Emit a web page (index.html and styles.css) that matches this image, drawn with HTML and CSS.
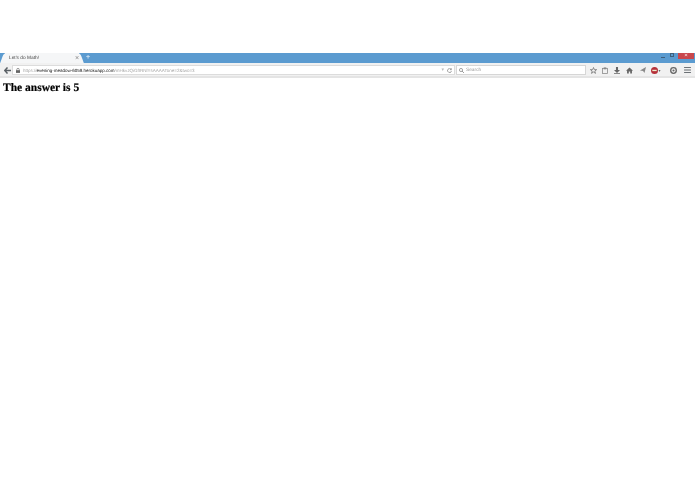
FILE: index.html
```html
<!DOCTYPE html>
<html lang="en">
<head>
  <meta charset="UTF-8" />
  <title>Let's do Math!</title>
  <link rel="stylesheet" href="styles.css">
</head>
<body>
  <div class="top-space"></div>

  <!-- BROWSER CHROME -->
  <div class="chrome">
    <div class="tab-bar">
      <div class="tab">
        <span class="tab-title">Let's do Math!</span>
        <span class="tab-close">×</span>
      </div>
      <span class="new-tab">+</span>
      <div class="window-btns">
        <span class="win-min"></span>
        <span class="win-max"></span>
        <span class="win-close">×</span>
      </div>
    </div>

    <div class="nav-bar">
      <span class="back-btn">
        <svg width="7" height="7" viewBox="0 0 8 8"><path d="M4 .5 .8 4 4 7.500M1 4h7" fill="none" stroke="#5a6065" stroke-width="1.700"/></svg>
      </span>
      <div class="url-box">
        <svg class="lock" width="4" height="5" viewBox="0 0 5 6"><path d="M1 3V1.800a1.500 1.500 0 0 1 3 0V3" fill="none" stroke="#666" stroke-width=".8"/><rect y="2.600" width="5" height="3.400" fill="#666"/></svg>
        <span class="url-text"><span class="scheme">https://</span><b>evening-meadow-6059.herokuapp.com</b><span class="scheme">/mHkvJQiGfIRNlYsAAAATone=2&amp;two=3</span></span>
        <span class="url-drop">▾</span>
        <svg class="reload" width="5" height="5" viewBox="0 0 6 6"><path d="M5 1.600A2.400 2.400 0 1 0 5.400 3.500M5.200 .3v1.700H3.500" fill="none" stroke="#777" stroke-width=".8"/></svg>
      </div>
      <div class="search-box">
        <svg width="5" height="5" viewBox="0 0 6 6"><circle cx="2.400" cy="2.400" r="1.900" fill="none" stroke="#777" stroke-width=".8"/><path d="M3.800 3.800 5.800 5.800" stroke="#777"/></svg>
        <span>Search</span>
      </div>
      <div class="tools">
        <span class="tool tool-star"><svg width="7" height="7" viewBox="0 0 8 8"><path d="M4 .6 5 3h2.600L5.500 4.600l.8 2.700L4 5.700 1.700 7.300l.8-2.700L.4 3H3z" fill="none" stroke="#666" stroke-width=".8"/></svg></span>
        <span class="tool tool-clip"><svg width="6" height="7" viewBox="0 0 7 8"><rect x=".5" y="1.500" width="6" height="6" fill="none" stroke="#888" stroke-width=".9"/><rect x="2" y=".4" width="3" height="2.200" fill="#888"/></svg></span>
        <span class="tool"><svg width="6" height="7" viewBox="0 0 7 8"><path d="M2.300 0h2.400v3.500H7L3.500 7 0 3.500h2.300zM0 7.300h7V8H0z" fill="#666"/></svg></span>
        <span class="tool"><svg width="7" height="7" viewBox="0 0 8 8"><path d="M4 .5 8 4.300H6.800V7.500H4.800V5.200H3.200v2.300H1.200V4.300H0z" fill="#666"/></svg></span>
        <span class="tool"><svg width="6" height="6" viewBox="0 0 7 7"><path d="M7 0 5.200 7 3.600 4.800 0 4.200z" fill="#888"/></svg></span>
        <span class="tool tool-blocker"><svg width="7" height="7" viewBox="0 0 8 8"><circle cx="4" cy="4" r="4" fill="#b5303a"/><rect x="1.500" y="3.200" width="5" height="1.500" fill="#eec"/></svg><i>▾</i></span>
        <span class="tool tool-gear"><svg width="7" height="7" viewBox="0 0 8 8"><circle cx="4" cy="4" r="3.200" fill="none" stroke="#666" stroke-width="1.500"/><circle cx="4" cy="4" r="1.200" fill="#666"/></svg></span>
        <span class="tool tool-menu"><svg width="7" height="6" viewBox="0 0 8 7"><path d="M0 .5h8M0 3.500h8M0 6.500h8" stroke="#5a6065" stroke-width="1.100"/></svg></span>
      </div>
    </div>
  </div>

  <!-- PAGE -->
  <h1>The answer is 5</h1>
</body>
</html>
```
FILE: styles.css
```css
* {
  box-sizing: border-box;
}
html, body {
  margin: 0;
  background: #fff;
}
body {
  height: 494px;
  overflow: hidden;
  font-family: 'Liberation Sans', Arial, sans-serif;
  text-rendering: geometricPrecision;
}
svg {
  display: block;
  flex: none;
}

.top-space {
  height: 53px;
}

/* the reference is a scaled down capture, so everything is a little soft */
.chrome, h1 {
  filter: blur(0.3px);
}

.tab-bar {
  display: flex;
  align-items: flex-end;
  height: 10px;
  background: #5b9bd0;
}
.tab {
  position: relative;
  display: flex;
  align-items: center;
  justify-content: space-between;
  width: 74px;
  height: 10px;
  margin-left: 5px;
  padding: 0 0 0 4px;
  background: #f5f6f7;
  font-size: 4.800px;
  color: #444;
}
.tab::before, .tab::after {
  content: "";
  position: absolute;
  top: 0;
  width: 6px;
  height: 10px;
  background: #f5f6f7;
}
.tab::before {
  left: -3px;
  border-radius: 3px 0 0 0;
  transform: skewX(-20deg);
}
.tab::after {
  right: -3px;
  border-radius: 0 3px 0 0;
  transform: skewX(20deg);
}
.tab-title, .tab-close {
  position: relative;
  z-index: 1;
}
.tab-close {
  font-size: 7px;
  color: #888;
}
.new-tab {
  margin-left: 7px;
  width: 6px;
  line-height: 10px;
  font-size: 7px;
  font-weight: bold;
  color: #cfe2f2;
}
.window-btns {
  display: flex;
  align-items: flex-start;
  align-self: flex-start;
  margin-left: auto;
  margin-right: 1px;
  height: 6px;
}
.win-min {
  width: 4px;
  height: 1px;
  margin: 4px 5px 0 0;
  background: #3f5f7c;
}
.win-max {
  width: 4px;
  height: 4px;
  margin: 0 4px 0 0;
  border: 1px solid #3f5f7c;
}
.win-close {
  width: 16px;
  height: 6px;
  background: #c9474d;
  color: #fff;
  font-size: 6px;
  line-height: 6px;
  text-align: center;
}

.nav-bar {
  display: flex;
  align-items: flex-start;
  height: 15px;
  padding: 2px 0 0 3px;
  background: #f1f1f1;
  border-bottom: 2px solid #e4e4e4;
}
.back-btn {
  display: flex;
  align-items: center;
  justify-content: center;
  width: 9px;
  height: 10px;
  flex: none;
}
.url-box {
  display: flex;
  align-items: center;
  width: 443px;
  height: 10px;
  padding: 0 2px 0 3px;
  background: #fff;
  border: 1px solid #dcdcdc;
}
.lock {
  margin-right: 3px;
}
.url-text {
  flex: 1;
  font-size: 4.500px;
  white-space: nowrap;
  overflow: hidden;
  color: #111;
}
.url-text b {
  font-weight: normal;
}
.scheme {
  color: #a5a5a5;
}
.url-drop {
  margin-right: 3px;
  font-size: 5px;
  color: #bbb;
}
.search-box {
  display: flex;
  align-items: center;
  gap: 2px;
  width: 130px;
  height: 10px;
  margin-left: 1px;
  padding: 0 2px;
  background: #fff;
  border: 1px solid #d6d6d6;
  font-size: 4.800px;
  color: #999;
}
.tools {
  display: flex;
  height: 10px;
  margin-left: 1px;
}
.tool {
  display: flex;
  align-items: center;
  justify-content: center;
  width: 13px;
}
.tool-star {
  width: 12px;
}
.tool-clip {
  width: 11px;
}
.tool-blocker {
  width: 14px;
}
.tool-blocker i {
  font-size: 4px;
  font-style: normal;
  color: #666;
}
.tool-gear {
  width: 14px;
  margin-left: 3px;
}
.tool-menu {
  width: 14px;
}

h1 {
  margin: 3px 0 0 3px;
  font-family: 'Liberation Serif', 'Times New Roman', serif;
  font-size: 11.500px;
  line-height: 15px;
  font-weight: bold;
  color: #000;
  -webkit-text-stroke: 0.2px #000;
}
```
